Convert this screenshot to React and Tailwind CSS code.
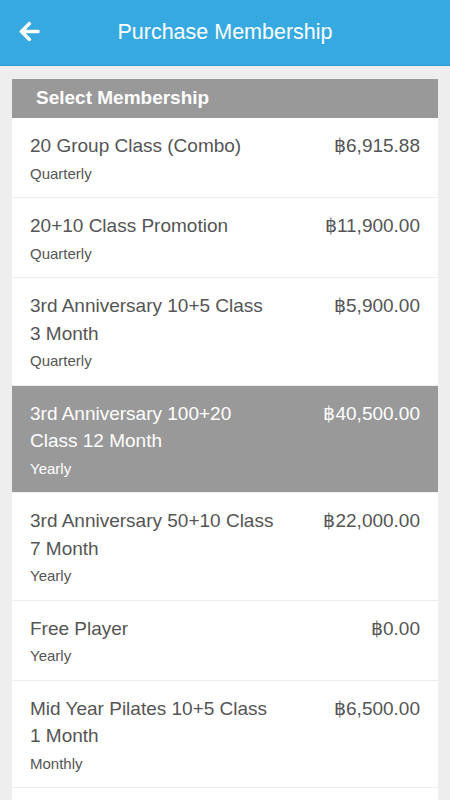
import React, { useState } from "react";
import { FaArrowLeft } from "react-icons/fa";

const memberships = [
  { id: 1, name: "20 Group Class (Combo)", period: "Quarterly", price: "฿6,915.88" },
  { id: 2, name: "20+10 Class Promotion", period: "Quarterly", price: "฿11,900.00" },
  { id: 3, name: "3rd Anniversary 10+5 Class 3 Month", period: "Quarterly", price: "฿5,900.00" },
  { id: 4, name: "3rd Anniversary 100+20 Class 12 Month", period: "Yearly", price: "฿40,500.00" },
  { id: 5, name: "3rd Anniversary 50+10 Class 7 Month", period: "Yearly", price: "฿22,000.00" },
  { id: 6, name: "Free Player", period: "Yearly", price: "฿0.00" },
  { id: 7, name: "Mid Year Pilates 10+5 Class 1 Month", period: "Monthly", price: "฿6,500.00" },
];

const PurchaseMembership = () => {
  const [selectedId, setSelectedId] = useState(4);

  return (
    <div className="h-[800px] overflow-hidden bg-[#eeeeee] font-['Liberation_Sans',Arial,sans-serif]">
      <header className="relative flex h-[66px] items-center justify-center border-b border-[#2b9bd8] bg-[#36a9e1]">
        <button type="button" className="absolute left-[18px] top-[20px] text-white">
          <FaArrowLeft className="h-[23px] w-[23px]" />
        </button>
        <h1 className="text-[21.5px] text-white">Purchase Membership</h1>
      </header>

      <div className="mx-3 mt-[13px] min-h-[800px] bg-white">
        <div className="flex h-[39px] items-center bg-[#999999] px-6 text-[19px] font-bold text-white">
          Select Membership
        </div>

        {memberships.map((item) => {
          const selected = item.id === selectedId;
          return (
            <button
              type="button"
              key={item.id}
              onClick={() => setSelectedId(item.id)}
              className={`flex w-full items-start justify-between border-b border-[#eeeeee] pb-[13.5px] pl-[18px] pr-[18px] pt-[14px] text-left ${
                selected ? "bg-[#999999] text-white" : "bg-white text-[#555555]"
              }`}
            >
              <div className="w-[247px]">
                <p className="text-[19px] leading-[27.5px]">{item.name}</p>
                <p className="mt-1 text-[15px] leading-[20px]">{item.period}</p>
              </div>
              <p className="text-[19px] leading-[27.5px]">{item.price}</p>
            </button>
          );
        })}
      </div>
    </div>
  );
};

export default function App() {
  return <PurchaseMembership />;
}
